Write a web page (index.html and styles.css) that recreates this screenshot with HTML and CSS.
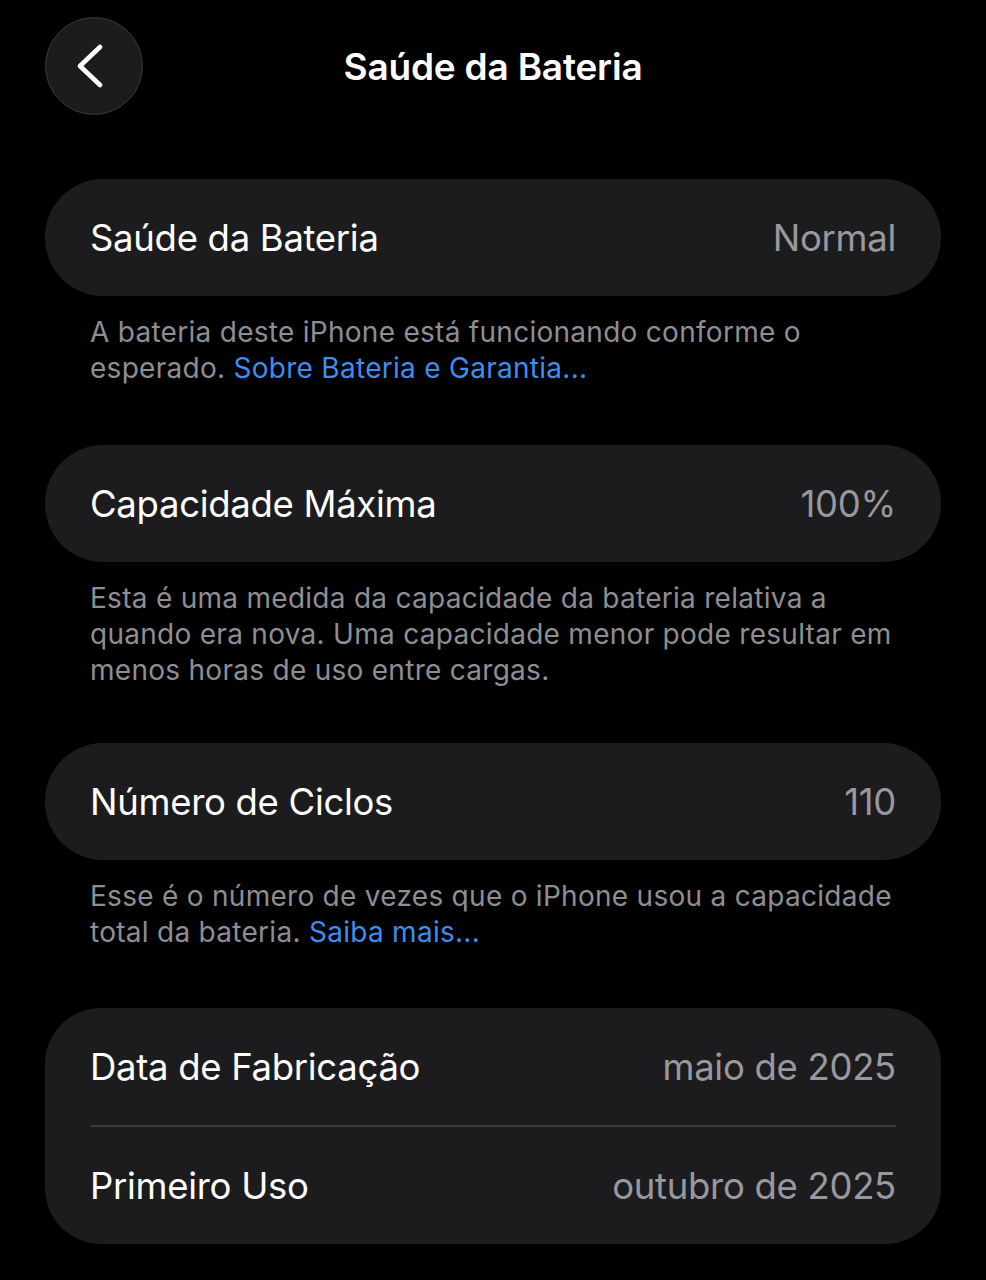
FILE: index.html
```html
<!DOCTYPE html>
<html lang="pt-BR">
<head>
<meta charset="utf-8">
<title>Saúde da Bateria</title>
<link rel="stylesheet" href="styles.css">
</head>
<body>
<div class="page">
  <header class="nav">
    <button class="back" aria-label="Voltar">
      <svg width="44" height="44" viewBox="0 0 44 44"><path d="M32 3 L12 22 L32 41" fill="none" stroke="#fff" stroke-width="4.6" stroke-linecap="round" stroke-linejoin="round"/></svg>
    </button>
    <h1 class="title">Saúde da Bateria</h1>
    <div class="spacer"></div>
  </header>

  <section class="group g1">
    <div class="card">
      <div class="row"><span class="label">Saúde da Bateria</span><span class="value">Normal</span></div>
    </div>
    <p class="note">A bateria deste iPhone está funcionando conforme o esperado. <span class="link">Sobre Bateria e Garantia...</span></p>
  </section>

  <section class="group g2">
    <div class="card">
      <div class="row"><span class="label">Capacidade Máxima</span><span class="value">100%</span></div>
    </div>
    <p class="note">Esta é uma medida da capacidade da bateria relativa a quando era nova. Uma capacidade menor pode resultar em menos horas de uso entre cargas.</p>
  </section>

  <section class="group g3">
    <div class="card">
      <div class="row"><span class="label">Número de Ciclos</span><span class="value">110</span></div>
    </div>
    <p class="note">Esse é o número de vezes que o iPhone usou a capacidade total da bateria. <span class="link">Saiba mais...</span></p>
  </section>

  <section class="group g4">
    <div class="card card-multi">
      <div class="row"><span class="label">Data de Fabricação</span><span class="value">maio de 2025</span></div>
      <div class="divider"></div>
      <div class="row"><span class="label">Primeiro Uso</span><span class="value">outubro de 2025</span></div>
    </div>
  </section>
</div>
</body>
</html>
```

FILE: styles.css
```css
html, body {
  margin: 0;
  padding: 0;
  background: #000;
}
body {
  font-family: Inter, "Liberation Sans", sans-serif;
  color: #fff;
  -webkit-font-smoothing: antialiased;
}
.page {
  padding: 17px 45px 0 45px;
  display: flex;
  flex-direction: column;
}
.nav {
  display: grid;
  grid-template-columns: 98px 1fr 98px;
  align-items: center;
  height: 98px;
}
.back {
  width: 98px;
  height: 98px;
  border-radius: 50%;
  background: #1c1c1e;
  border: 1.5px solid #3a3a3c;
  box-sizing: border-box;
  display: flex;
  align-items: center;
  justify-content: center;
  padding: 0 8px 0 0;
}
.title {
  margin: 0;
  text-align: center;
  font-size: 37px;
  font-weight: 600;
  letter-spacing: -0.2px;
}
.group {
  display: flex;
  flex-direction: column;
}
.g1 { margin-top: 64px; }
.g2 { margin-top: 59px; }
.g3 { margin-top: 55px; }
.g4 { margin-top: 58px; }
.card {
  background: #1c1c1e;
  border-radius: 58px;
  padding: 0 45px;
}
.card-multi {
  border-radius: 56px;
}
.row {
  height: 117px;
  display: flex;
  align-items: center;
  justify-content: space-between;
}
.label {
  font-size: 36.5px;
  font-weight: 400;
  color: #fff;
  letter-spacing: -0.3px;
}
.value {
  font-size: 36.5px;
  color: #98989e;
  letter-spacing: -0.3px;
}
.divider {
  height: 2px;
  background: #3a3a3c;
}
.note {
  margin: 18px 0 0 0;
  padding: 0 45px;
  font-size: 28px;
  line-height: 36px;
  color: #8e8e93;
  letter-spacing: 0.28px;
}
.link {
  color: #3e8ef0;
}
```
